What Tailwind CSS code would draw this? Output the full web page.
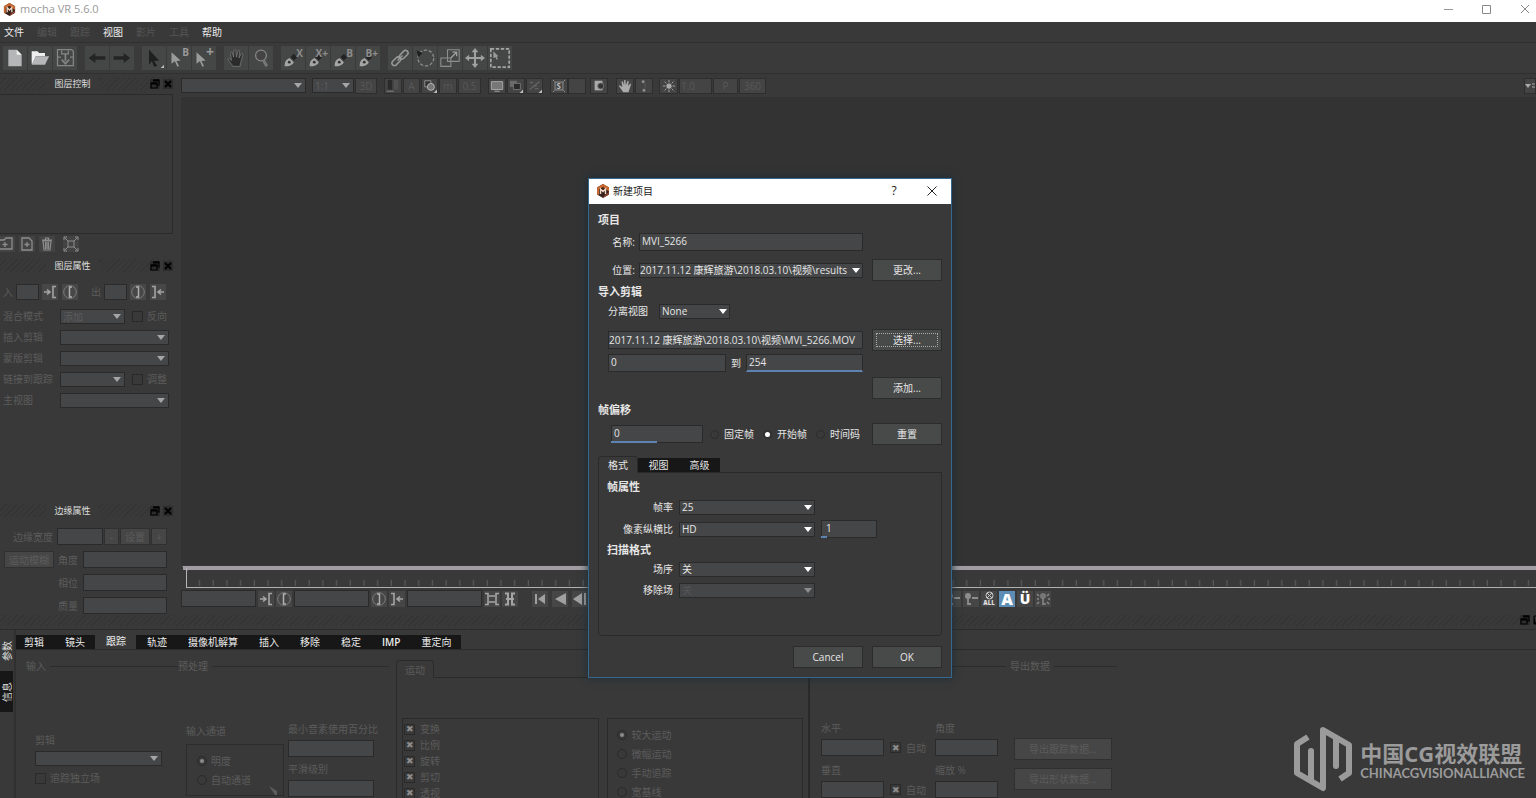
<!DOCTYPE html>
<html lang="zh-CN">
  <head>
    <meta charset="UTF-8" />
    <meta name="viewport" content="width=device-width, initial-scale=1.0" />
    <title>mocha VR 5.6.0</title>
    <script src="https://cdn.jsdelivr.net/npm/@tailwindcss/browser@4"></script>
  </head>
  <body class="relative flex h-screen flex-col overflow-hidden bg-[#393939] font-['Open_Sans','Noto_Sans_CJK_SC',sans-serif] text-[10px] leading-4 text-[#5c5c5c] [&_label]:whitespace-nowrap [&_select]:block [&_select]:h-[15px] [&_select]:w-full [&_select]:appearance-none [&_select]:border [&_select]:border-[#2a2a2a] [&_select]:bg-[#454648] [&_select]:pl-[2px] [&_select]:leading-3 [&_select]:opacity-100 [&_input[type=text]]:min-w-0 [&_input[type=text]]:border [&_input[type=text]]:border-[#2a2a2a] [&_input[type=text]]:bg-[#454648]">

    <!-- icons -->
    <svg class="hidden">
      <symbol id="logo" viewBox="0 0 14 14"><path d="M7 0l6 3.500v7L7 14l-6-3.500v-7z" fill="#3a221c"/><path d="M7 0l6 3.500v4L7 3 3 5v6L1 10.500v-7z" fill="#c8672f"/><path d="M7 14l6-3.500V8l-4 3z" fill="#8d4630"/><path d="M4.500 10V5L7 7.500 9.500 5v5" fill="none" stroke="#f0d8c8" stroke-width="1.400"/></symbol>
      <symbol id="arrow" viewBox="0 0 8 5"><path d="M0 0h8L4 5z" fill="currentColor"/></symbol>
      <symbol id="float" viewBox="0 0 10 10"><path d="M0 0h10v10H0z" fill="#2c2c2c"/><path d="M3 1h6v5H7M1 4h6v5H1z" fill="none" stroke="currentColor" stroke-width="1.200"/><path d="M3 1.500h6M1 4.500h6" stroke="currentColor" stroke-width="2"/></symbol>
      <symbol id="close" viewBox="0 0 10 10"><path d="M0 0h10v10H0z" fill="#2c2c2c"/><path d="M2 2l6 6M8 2L2 8" stroke="currentColor" stroke-width="2" fill="none"/></symbol>
      <symbol id="new" viewBox="0 0 24 24"><path d="M4 2h10l6 6v14H4z" fill="#b4b6b8"/><path d="M14 2v6h6z" fill="#eee"/></symbol>
      <symbol id="open" viewBox="0 0 24 24"><path d="M2 4h7l2 2h7v4H7L3 19H2z" fill="#eee"/><path d="M7 10h16l-5 10H2z" fill="#b4b6b8"/></symbol>
      <symbol id="save" viewBox="0 0 24 24"><path d="M3 2h17l2 2v17H3zM8 3v4h8V3M3 11h4M18 11h4" fill="none" stroke="#858585" stroke-width="1.500"/><path d="M12.500 7v9M8 14l4.500 5 4.500-5" fill="none" stroke="#858585" stroke-width="2"/></symbol>
      <symbol id="undo" viewBox="0 0 24 24"><path d="M2 12l8-6v4h12v4H10v4z" fill="#242424"/></symbol>
      <symbol id="redo" viewBox="0 0 24 24"><path d="M22 12l-8-6v4H2v4h12v4z" fill="#242424"/></symbol>
      <symbol id="cursor" viewBox="0 0 24 24"><path d="M6 2l12 13-6 .5 4 6-4 1-2.500-7L6 20z" fill="#1f1f1f"/><path d="M24 20v4h-4z" fill="#bbb"/></symbol>
      <symbol id="cursorsm" viewBox="0 0 24 24"><path d="M3 5l11 10-5 .5 3 6-2 1-3-6.500L3 19z" fill="#9a9a9a"/></symbol>
      <symbol id="hand" viewBox="0 0 24 24"><path d="M8 22c-1-3-4-5-6-9 1.500-1 3 0 4.500 2L5.500 6c.5-1.500 2-1.500 2.300 0L9 11l.5-8c.5-1.500 2-1.500 2.300 0l.7 8 2-7.500c.6-1.500 2-1 2 .5L15.500 12l3-5c1-1 2.200-.2 1.800 1L18 16c-.5 2-1 4-1 6z" fill="#2b2b2b" stroke="#7c7c7c" stroke-width=".9"/></symbol>
      <symbol id="zoomer" viewBox="0 0 24 24"><circle cx="12" cy="9" r="6.500" fill="#444" stroke="#858585" stroke-width="1.500"/><path d="M15 15l4 7" stroke="#777" stroke-width="3.500"/></symbol>
      <symbol id="pen" viewBox="0 0 24 24"><path d="M2 22c0-5 1-8 6-10l5 5c-2 4-6 5-11 5z" fill="#a5a5a5"/><path d="M9 11l4-4 4 4-4 4z" fill="#232323"/><circle cx="7.500" cy="17" r="1.700" fill="#333"/></symbol>
      <symbol id="link" viewBox="0 0 24 24"><g fill="none" stroke="#9a9a9a" stroke-width="1.800"><rect x="1.500" y="13" width="12" height="6" rx="3" transform="rotate(-45 7.500 16)"/><rect x="10.500" y="5" width="12" height="6" rx="3" transform="rotate(-45 16.500 8)"/><path d="M9 15l6-6"/></g></symbol>
      <symbol id="rotate" viewBox="0 0 24 24"><circle cx="13" cy="12" r="9.500" fill="none" stroke="#8d8d8d" stroke-width="1.500" stroke-dasharray="4 2"/><path d="M2 3l7 3-5 5z" fill="#1f1f1f"/></symbol>
      <symbol id="scale" viewBox="0 0 24 24"><path d="M9 2h14v14H9zM1 12h12v10H1z" fill="none" stroke="#8d8d8d" stroke-width="1.300"/><path d="M13 12l6-6M15 5h5v5" fill="none" stroke="#a0a0a0" stroke-width="1.500"/></symbol>
      <symbol id="move" viewBox="0 0 24 24"><path d="M12 3v18M3 12h18" stroke="#a0a0a0" stroke-width="2.500"/><path d="M12 0l4 5H8zM12 24l4-5H8zM0 12l5-4v8zM24 12l-5-4v8z" fill="#a0a0a0"/></symbol>
      <symbol id="marquee" viewBox="0 0 24 24"><rect x="1" y="1" width="22" height="22" fill="none" stroke="#a5a5a5" stroke-width="2" stroke-dasharray="4 2"/><path d="M4 4l6 6-2 .5 1.500 3-1.500.5-1.500-3L4 12z" fill="#999"/></symbol>
      <symbol id="folder" viewBox="0 0 16 16"><path d="M0 4h5l2-2h6v11H0M6 6v5M3.500 8.500h5" fill="none" stroke="#8d8d8d" stroke-width="1.300"/></symbol>
      <symbol id="dup" viewBox="0 0 16 16"><path d="M3 2h7l3 3v9H3zM8 6v5M5.500 8.500h5" fill="none" stroke="#8d8d8d" stroke-width="1.300"/></symbol>
      <symbol id="trash" viewBox="0 0 16 16"><path d="M4 5h8l-1 9H5zM3 4h10M6.500 3.500V2h3v1.500M6.500 6v7M8 6v7M9.500 6v7" fill="none" stroke="#8d8d8d" stroke-width="1.200"/></symbol>
      <symbol id="fit" viewBox="0 0 16 16"><path d="M5 5h6v6H5zM5 5L2 2M11 5l3-3M5 11l-3 3M11 11l3 3M1 4V1h3M12 1h3v3M1 12v3h3M12 15h3v-3" fill="none" stroke="#8d8d8d"/></symbol>
      <symbol id="in" viewBox="0 0 16 16"><path d="M2 8h5M5 5.500L8 8l-3 2.500M14 2.500h-3v11h3" fill="none" stroke="#a5a5a5" stroke-width="1.600"/></symbol>
      <symbol id="out" viewBox="0 0 16 16"><path d="M14 8H9M11 5.500L8 8l3 2.500M2 2.500h3v11H2" fill="none" stroke="#a5a5a5" stroke-width="1.600"/></symbol>
      <symbol id="setin" viewBox="0 0 16 16"><circle cx="8" cy="8" r="6.300" fill="none" stroke="#7d7d7d"/><path d="M10 3H7.500v10H10" fill="none" stroke="#b0b0b0" stroke-width="1.500"/></symbol>
      <symbol id="setout" viewBox="0 0 16 16"><circle cx="8" cy="8" r="6.300" fill="none" stroke="#7d7d7d"/><path d="M6 3h2.500v10H6" fill="none" stroke="#b0b0b0" stroke-width="1.500"/></symbol>
      <symbol id="range" viewBox="0 0 16 16"><path d="M1 2.500h3v11H1M15 2.500h-3v11h3M5 5h6M5 11h6" fill="none" stroke="#a5a5a5" stroke-width="1.600"/></symbol>
      <symbol id="range2" viewBox="0 0 16 16"><path d="M3 2.500h3v11H3M13 2.500h-3v11h3M4 8h8" fill="none" stroke="#a5a5a5" stroke-width="2"/></symbol>
      <symbol id="first" viewBox="0 0 16 16"><path d="M3 3h2v10H3zM13 3v10L6 8z" fill="#a0a0a0"/></symbol>
      <symbol id="rev" viewBox="0 0 16 16"><path d="M14 2v12L3 8z" fill="#a0a0a0"/></symbol>
      <symbol id="step" viewBox="0 0 16 16"><path d="M10 2v12L1 8zM12 2h2v12h-2z" fill="#a0a0a0"/></symbol>
      <symbol id="key" viewBox="0 0 16 16"><circle cx="5" cy="5" r="3" fill="#8d8d8d"/><path d="M5 7v7M5 13h3M9 7h6" stroke="#8d8d8d" stroke-width="1.800"/></symbol>
      <symbol id="monitor" viewBox="0 0 16 16"><path d="M1.500 3h13v9h-13z" fill="#777" stroke="#b0b0b0"/><path d="M5 14h6" stroke="#b0b0b0"/></symbol>
      <symbol id="layers" viewBox="0 0 16 16"><path d="M1 2h8v7H1z" fill="#6a6a6a"/><path d="M5 5h8v7H5z" fill="#2a2a2a" stroke="#777"/><path d="M16 12v4h-4z" fill="#bbb"/></symbol>
      <symbol id="mesh" viewBox="0 0 16 16"><path d="M2 12L13 3M2 4l4 0M8 11h4M7 8h3" stroke="#626262" stroke-width="1.500"/><path d="M16 12v4h-4z" fill="#bbb"/></symbol>
      <symbol id="half" viewBox="0 0 16 16"><path d="M3 2h9v11H3z" fill="#aaa"/><circle cx="10" cy="8" r="3.500" fill="#333" stroke="#777"/></symbol>
      <symbol id="palm" viewBox="0 0 16 16"><path d="M6 15L1 8l1-1 3 2-1-6 1.500-.5L7 7l0-6h1.500L9 7l2-5 1.300.5L11.500 8 14 5l1 1-2 6-1 3z" fill="#aaa"/></symbol>
      <symbol id="nodes" viewBox="0 0 16 16"><path d="M7 3L10 8 8 13" stroke="#5a5a5a" fill="none"/><circle cx="7" cy="3" r="1.700" fill="#8d8d8d"/><circle cx="8" cy="13" r="1.700" fill="#8d8d8d"/></symbol>
      <symbol id="sun" viewBox="0 0 16 16"><circle cx="8" cy="8" r="3" fill="#aaa"/><path d="M8 1v3M8 12v3M1 8h3M12 8h3M3 3l2 2M11 11l2 2M13 3l-2 2M5 11l-2 2" stroke="#aaa"/></symbol>
      <symbol id="shapes" viewBox="0 0 16 16"><path d="M2 2h7v7H2z" fill="#333" stroke="#999"/><circle cx="9" cy="9" r="4" fill="#777" stroke="#bbb"/><path d="M16 12v4h-4z" fill="#bbb"/></symbol>
    </svg>

    <!-- title bar -->
    <header class="flex h-[22px] shrink-0 items-center bg-white pb-1 text-[#999]">
      <svg class="ml-[3px] size-[13px]"><use href="#logo" /></svg>
      <h1 class="ml-1 text-[11px]">mocha VR 5.6.0</h1>
      <div class="ml-auto flex gap-[28px] pr-[6px]">
        <button aria-label="最小化"><svg class="size-[10px]" viewBox="0 0 10 10"><path d="M0 5.500h9" stroke="#999" /></svg></button>
        <button aria-label="最大化"><svg class="size-[10px]" viewBox="0 0 10 10"><path d="M.5 1.500h8v8h-8z" fill="none" stroke="#888" /></svg></button>
        <button aria-label="关闭"><svg class="size-[10px]" viewBox="0 0 10 10"><path d="M1 1l8 8M9 1L1 9" stroke="#888" /></svg></button>
      </div>
    </header>

    <nav class="flex h-[21px] shrink-0 items-center gap-[13px] border-b border-[#303030] pl-1 text-[#555]">
      <a href="#" class="text-[#ececec]">文件</a>
      <a href="#">编辑</a>
      <a href="#">跟踪</a>
      <a href="#" class="text-[#ececec]">视图</a>
      <a href="#">影片</a>
      <a href="#">工具</a>
      <a href="#" class="text-[#ececec]">帮助</a>
    </nav>

    <!-- main toolbar -->
    <div class="flex h-[31px] shrink-0 items-center gap-2 border-b border-[#303030] bg-[#3a3a3a] pl-[3px] [&_button]:relative [&_button]:size-6 [&_button]:bg-[#454646] [&_svg]:size-5 [&_svg]:m-[2px] [&>div]:flex [&>div]:gap-px">
      <div>
        <button aria-label="新建"><svg><use href="#new" /></svg></button>
        <button aria-label="打开"><svg><use href="#open" /></svg></button>
        <button aria-label="保存"><svg><use href="#save" /></svg></button>
      </div>
      <div>
        <button aria-label="撤销"><svg><use href="#undo" /></svg></button>
        <button aria-label="重做"><svg><use href="#redo" /></svg></button>
      </div>
      <div>
        <button aria-label="选择"><svg><use href="#cursor" /></svg></button>
        <button aria-label="选择 B"><svg><use href="#cursorsm" /></svg><b class="absolute right-[2px] top-0 leading-3 text-[#9a9a9a]">B</b></button>
        <button aria-label="添加点"><svg><use href="#cursorsm" /></svg><b class="absolute right-[2px] top-0 text-sm leading-3 text-[#9a9a9a]">+</b></button>
      </div>
      <div>
        <button aria-label="平移"><svg><use href="#hand" /></svg></button>
        <button aria-label="缩放"><svg><use href="#zoomer" /></svg></button>
      </div>
      <div class="[&_b]:absolute [&_b]:right-[2px] [&_b]:top-px [&_b]:leading-3 [&_b]:text-[#8d8d8d]">
        <button aria-label="X 样条"><svg><use href="#pen" /></svg><b>X</b></button>
        <button aria-label="添加 X 样条"><svg><use href="#pen" /></svg><b>X+</b></button>
        <button aria-label="贝塞尔"><svg><use href="#pen" /></svg><b>B</b></button>
        <button aria-label="添加贝塞尔"><svg><use href="#pen" /></svg><b>B+</b></button>
      </div>
      <div>
        <button aria-label="链接"><svg><use href="#link" /></svg></button>
        <button aria-label="旋转"><svg><use href="#rotate" /></svg></button>
        <button aria-label="缩放图层"><svg><use href="#scale" /></svg></button>
        <button aria-label="移动"><svg><use href="#move" /></svg></button>
        <button aria-label="框选"><svg><use href="#marquee" /></svg></button>
      </div>
    </div>

    <main class="flex min-h-0 flex-1">
      <!-- left docks -->
      <aside class="flex w-[181px] shrink-0 flex-col pr-[6px]">
        <section>
          <div class="relative mt-[3px] flex h-[13px] items-center justify-center bg-[repeating-linear-gradient(135deg,#343434_0_1px,transparent_1px_4px)] pr-[30px]">
            <h2 class="bg-[#393939] px-2 text-[9px] text-[#ddd]">图层控制</h2>
            <div class="absolute right-[2px] flex gap-[3px] bg-[#393939] text-black"><svg class="size-[10px]"><use href="#float" /></svg><svg class="size-[10px]"><use href="#close" /></svg></div>
          </div>
          <div class="mr-[2px] mt-1 h-[140px] border border-l-0 border-[#2a2a2a]"></div>
          <div class="mt-[2px] flex gap-1 [&_button]:bg-[#434343] [&_svg]:size-4">
            <button aria-label="新建组" class="-ml-px"><svg><use href="#folder" /></svg></button>
            <button aria-label="复制"><svg><use href="#dup" /></svg></button>
            <button aria-label="删除"><svg><use href="#trash" /></svg></button>
            <button aria-label="适合" class="ml-1"><svg><use href="#fit" /></svg></button>
          </div>
        </section>

        <section>
          <div class="relative mt-[7px] flex h-[13px] items-center justify-center bg-[repeating-linear-gradient(135deg,#343434_0_1px,transparent_1px_4px)] pr-[30px]">
            <h2 class="bg-[#393939] px-2 text-[9px] text-[#ddd]">图层属性</h2>
            <div class="absolute right-[2px] flex gap-[3px] bg-[#393939] text-black"><svg class="size-[10px]"><use href="#float" /></svg><svg class="size-[10px]"><use href="#close" /></svg></div>
          </div>
          <div class="mt-3 flex items-center gap-[3px] pl-[3px] [&_button]:bg-[#474747] [&_svg]:size-4 [&_input]:h-4 [&_input]:w-[23px]">
            <label for="in">入</label><input type="text" id="in" disabled />
            <button aria-label="入点"><svg><use href="#in" /></svg></button>
            <button aria-label="设置入点" class="ml-px"><svg><use href="#setin" /></svg></button>
            <label for="out" class="ml-[10px]">出</label><input type="text" id="out" disabled />
            <button aria-label="设置出点"><svg><use href="#setout" /></svg></button>
            <button aria-label="出点" class="ml-px"><svg><use href="#out" /></svg></button>
          </div>
          <div class="mt-[9px] grid grid-cols-[57px_65px_1fr] gap-y-[6px] pl-[3px] pr-[6px] leading-[15px] [&_span>svg]:absolute [&_span>svg]:right-1 [&_span>svg]:top-[5px] [&_span>svg]:h-[5px] [&_span>svg]:w-2 [&_span>svg]:text-[#a5a5a5] [&_span]:relative [&_input]:mr-1 [&_input]:size-[11px] [&_input]:appearance-none [&_input]:border [&_input]:border-[#282828]">
            <label for="blend">混合模式</label>
            <span><select id="blend" disabled><option>添加</option></select><svg><use href="#arrow" /></svg></span>
            <label class="flex items-center pl-[7px]"><input type="checkbox" disabled />反向</label>
            <label for="insert">插入剪辑</label>
            <span class="col-span-2"><select id="insert" disabled></select><svg><use href="#arrow" /></svg></span>
            <label for="matte">蒙版剪辑</label>
            <span class="col-span-2"><select id="matte" disabled></select><svg><use href="#arrow" /></svg></span>
            <label for="linkto">链接到跟踪</label>
            <span><select id="linkto" disabled></select><svg><use href="#arrow" /></svg></span>
            <label class="flex items-center pl-[7px]"><input type="checkbox" disabled />调整</label>
            <label for="hero">主视图</label>
            <span class="col-span-2"><select id="hero" disabled></select><svg><use href="#arrow" /></svg></span>
          </div>
        </section>

        <section class="mt-auto pb-px">
          <div class="relative flex h-[13px] items-center justify-center bg-[repeating-linear-gradient(135deg,#343434_0_1px,transparent_1px_4px)] pr-[30px]">
            <h2 class="bg-[#393939] px-2 text-[9px] text-[#ddd]">边缘属性</h2>
            <div class="absolute right-[2px] flex gap-[3px] bg-[#393939] text-black"><svg class="size-[10px]"><use href="#float" /></svg><svg class="size-[10px]"><use href="#close" /></svg></div>
          </div>
          <div class="mt-[11px] flex flex-col gap-[6px] pl-1 pr-2 [&_button]:h-[17px] [&_button]:border [&_button]:border-[#303030] [&_button]:bg-[#464646] [&_button]:leading-3 [&_input]:h-[17px] [&>div]:flex [&>div]:items-center [&>div]:justify-end">
            <div>
              <label for="ew" class="mr-1">边缘宽度</label><input type="text" id="ew" class="w-[46px]" disabled />
              <button class="ml-px w-[15px]" disabled>-</button><button class="ml-px w-[30px]" disabled>设置</button><button class="ml-px w-[16px]" disabled>+</button>
            </div>
            <div><button class="mr-auto w-[50px]" disabled>运动模糊</button><label for="angle" class="mr-[5px]">角度</label><input type="text" id="angle" class="w-[84px]" disabled /></div>
            <div><label for="phase" class="mr-[5px]">相位</label><input type="text" id="phase" class="w-[84px]" disabled /></div>
            <div><label for="quality" class="mr-[5px]">质量</label><input type="text" id="quality" class="w-[84px]" disabled /></div>
          </div>
        </section>
      </aside>

      <!-- viewer -->
      <div class="flex min-w-0 flex-1 flex-col">
        <div class="flex h-[23px] shrink-0 items-center overflow-hidden [&_button]:h-4 [&_button]:border [&_button]:border-[#2e2e2e] [&_button]:bg-[#444] [&_button]:leading-3 [&_button]:text-[#585858] [&_button_svg]:mx-auto [&_button_svg]:size-[14px] [&_span]:relative [&_span>svg]:absolute [&_span>svg]:right-1 [&_span>svg]:top-[5px] [&_span>svg]:h-[5px] [&_span>svg]:w-2 [&_span>svg]:text-[#a5a5a5]">
          <span class="w-[125px]"><select aria-label="剪辑" disabled></select><svg><use href="#arrow" /></svg></span>
          <span class="ml-[6px] w-[42px]"><select aria-label="比例" disabled><option>1:1</option></select><svg><use href="#arrow" /></svg></span>
          <button class="ml-px w-[22px]" disabled>3D</button>
          <button aria-label="颜色" class="ml-[7px] w-[18px]"><svg viewBox="0 0 16 16"><path d="M2 1h5v11H2z" fill="#2a2a2a" /><path d="M9 1h5v11H9z" fill="#505050" /><path d="M1 14h8" stroke="#888" /></svg></button>
          <button class="ml-px w-[17px]" disabled>A</button>
          <button aria-label="遮罩" class="ml-px w-[17px]"><svg><use href="#shapes" /></svg></button>
          <button class="ml-px w-[18px]" disabled>m</button>
          <button class="ml-px w-[23px]" disabled>0.5</button>
          <button aria-label="显示" class="ml-[7px] w-[18px]"><svg><use href="#monitor" /></svg></button>
          <button aria-label="图层" class="ml-px w-[18px]"><svg><use href="#layers" /></svg></button>
          <button aria-label="网格" class="ml-px w-[17px]"><svg><use href="#mesh" /></svg></button>
          <button aria-label="稳定" class="ml-[7px] w-[18px]"><svg viewBox="0 0 16 16"><path d="M3.500 3.500h9v9h-9zM1 1l2 2M15 1l-2 2M1 15l2-2M15 15l-2-2" fill="none" stroke="#999" /><text x="5" y="11" font-size="9" font-weight="700" fill="#bbb">S</text></svg></button>
          <button class="w-[18px]" aria-label="空"></button>
          <button aria-label="对比" class="ml-1 w-[18px]"><svg><use href="#half" /></svg></button>
          <button aria-label="抓手" class="ml-2 w-[18px]"><svg><use href="#palm" /></svg></button>
          <button aria-label="节点" class="ml-px w-[18px]"><svg><use href="#nodes" /></svg></button>
          <button aria-label="亮度" class="ml-[6px] w-[19px]"><svg><use href="#sun" /></svg></button>
          <button class="ml-px w-[33px] pl-px text-left" disabled>1.0</button>
          <button class="ml-px w-[25px]" disabled>P</button>
          <button class="ml-px w-[27px]" disabled>360</button>
          <button aria-label="菜单" class="ml-auto w-[12px]"><svg class="!size-[10px]" viewBox="0 0 10 10"><path d="M0 3h6L3 7z" fill="#aaa" /><path d="M7 3h3M7 6h3" stroke="#aaa" /></svg></button>
        </div>
        <div class="flex-1 bg-[#333]"></div>
        <svg class="h-[25px] w-full shrink-0 bg-[#393939]">
          <defs><pattern id="ticks" width="13.700" height="25" patternUnits="userSpaceOnUse" x="5.500"><path d="M13 15v6" stroke="#606060" /></pattern></defs>
          <rect x="6" y="0" width="100%" height="25" fill="url(#ticks)" />
          <rect x="2" y="1" width="100%" height="4" fill="#a09ca2" />
          <path d="M1 1h9l-4 5z" fill="#a09ca2" />
          <path d="M5.500 3v20" stroke="#b5b5b5" />
          <rect x="5" y="22" width="100%" height="1" fill="#b0b0b0" />
        </svg>
        <div class="mb-[8px] flex h-[17px] shrink-0 items-center gap-[2px] [&_button]:h-4 [&_button]:w-4 [&_button]:bg-[#464646] [&_input]:h-[17px] [&_input]:w-[75px] [&_svg]:size-4">
          <input type="text" aria-label="入点帧" disabled />
          <button aria-label="入点"><svg><use href="#in" /></svg></button>
          <button aria-label="设置入点"><svg><use href="#setin" /></svg></button>
          <input type="text" aria-label="当前帧" disabled />
          <button aria-label="设置出点"><svg><use href="#setout" /></svg></button>
          <button aria-label="出点"><svg><use href="#out" /></svg></button>
          <input type="text" aria-label="出点帧" disabled />
          <button aria-label="缩放范围"><svg><use href="#range" /></svg></button>
          <button aria-label="完整范围"><svg><use href="#range2" /></svg></button>
          <button aria-label="第一帧" class="ml-3"><svg><use href="#first" /></svg></button>
          <button aria-label="倒放" class="ml-[2px]"><svg><use href="#rev" /></svg></button>
          <button aria-label="上一帧" class="ml-[2px]"><svg><use href="#step" /></svg></button>
          <button aria-label="添加关键帧" class="ml-[355px]"><svg><use href="#key" /></svg></button>
          <button aria-label="删除关键帧"><svg><use href="#key" /></svg></button>
          <button aria-label="全部关键帧" class="flex flex-col items-center text-[6px] font-black leading-[6px] text-[#e0e0e0]"><svg class="!size-[9px]" viewBox="0 0 9 9"><path d="M2 2l5 5M7 2L2 7" stroke="#ccc" /><circle cx="4.500" cy="4.500" r="3.500" fill="none" stroke="#ccc" /></svg>ALL</button>
          <button class="!bg-[#5d8cb5] text-base font-extrabold leading-4 text-white">A</button>
          <button class="text-sm font-extrabold leading-4 text-white">Ü</button>
          <button aria-label="关键帧选项"><svg viewBox="0 0 16 16"><circle cx="8" cy="5" r="3" fill="#777" /><path d="M8 7v7M8 13h3M2 3l2 2M2 13l2-2M14 3l-2 2M14 13l-2-2M2 8h2M13 8h2" stroke="#888" stroke-width="1.500" /></svg></button>
        </div>
      </div>
    </main>

    <!-- parameters dock -->
    <section class="flex h-[183px] shrink-0 flex-col overflow-hidden">
      <div class="flex h-[15px] shrink-0 justify-end border-b border-[#2c2c2c] pb-[4px]">
        <div class="h-[11px] flex-1 bg-[repeating-linear-gradient(135deg,#343434_0_1px,transparent_1px_4px)]"></div>
        <div class="flex gap-[3px] text-black"><svg class="size-[10px]"><use href="#float" /></svg><svg class="h-[10px] w-[3px]" viewBox="0 0 3 10"><path d="M1 1h2M1 1v8h2" stroke="currentColor" /></svg></div>
      </div>
      <div class="flex min-h-0 flex-1">
        <div class="w-[13px] shrink-0 text-[#ddd] [&_button]:flex [&_button]:h-[41px] [&_button]:w-[13px] [&_button]:items-center [&_button]:justify-center [&_span]:-rotate-90 [&_span]:whitespace-nowrap">
          <button><span>参数</span></button>
          <button class="bg-[#171717]"><span>信息</span></button>
        </div>
        <div class="ml-px flex min-w-0 flex-1 flex-col border-l-2 border-[#303030]">
          <div class="flex h-[20px] shrink-0 items-end border-b border-[#2a2a2a] text-[#ececec] [&_button]:h-[14px] [&_button]:bg-[#171717] [&_button]:pl-[11px] [&_button]:pr-[10px] [&_button]:leading-[14px]">
            <button class="!pl-2">剪辑</button><button>镜头</button><button class="!h-[17px] !bg-[#393939]">跟踪</button><button>轨迹</button><button>摄像机解算</button><button>插入</button><button>移除</button><button>稳定</button><button class="font-semibold">IMP</button><button>重定向</button>
          </div>
          <div class="flex min-h-0 flex-1 overflow-hidden [&_input[type=checkbox]]:flex [&_input[type=checkbox]]:size-[11px] [&_input[type=checkbox]]:shrink-0 [&_input[type=checkbox]]:appearance-none [&_input[type=checkbox]]:items-center [&_input[type=checkbox]]:justify-center [&_input[type=checkbox]]:border [&_input[type=checkbox]]:border-[#2a2a2a] [&_input[type=checkbox]]:text-[9px] [&_input[type=checkbox]]:text-[#8d8d8d] [&_input[type=checkbox]]:checked:before:content-['✖'] [&_input[type=radio]]:flex [&_input[type=radio]]:size-[10px] [&_input[type=radio]]:appearance-none [&_input[type=radio]]:items-center [&_input[type=radio]]:justify-center [&_input[type=radio]]:rounded-full [&_input[type=radio]]:border [&_input[type=radio]]:border-[#2a2a2a] [&_input[type=radio]]:checked:before:size-1 [&_input[type=radio]]:checked:before:rounded-full [&_input[type=radio]]:checked:before:bg-[#8d8d8d] [&_input[type=radio]]:checked:before:content-['']">
            <fieldset class="w-[162px] shrink-0 pl-[10px] pt-2">
              <div class="flex items-center gap-1 after:h-px after:flex-1 after:bg-[#2c2c2c]">输入</div>
              <div class="pl-[9px] pr-2 pt-[58px]">
                <label for="clip" class="block">剪辑</label>
                <span class="relative mt-[3px] block w-[127px]"><select id="clip" disabled></select><svg class="absolute right-1 top-[5px] h-[5px] w-2 text-[#a5a5a5]"><use href="#arrow" /></svg></span>
                <label class="mt-1 flex items-center gap-1"><input type="checkbox" disabled />追踪独立场</label>
              </div>
            </fieldset>
            <fieldset class="w-[211px] shrink-0 pt-2">
              <div class="flex items-center gap-1 after:h-px after:flex-1 after:bg-[#2c2c2c]">预处理</div>
              <div class="flex gap-1 pl-2 pt-[47px]">
                <div class="w-[98px] pt-[2px]">
                  <p>输入通道</p>
                  <div class="relative mt-[5px] h-[52px] border border-[#2c2c2c] pl-[10px] pt-2 [&_label]:mb-[3px] [&_label]:flex [&_label]:items-center [&_label]:gap-1">
                    <label><input type="radio" name="channel" checked disabled />明度</label>
                    <label><input type="radio" name="channel" disabled />自动通道</label>
                    <svg class="absolute bottom-0 right-[5px] size-[9px]" viewBox="0 0 9 9"><path d="M0 0l8 5v4H6z" fill="#5c5c5c" /></svg>
                  </div>
                </div>
                <div class="[&_input]:block [&_input]:h-[17px] [&_input]:w-[86px]">
                  <label for="minpx" class="mb-[3px] block">最小音素使用百分比</label>
                  <input type="text" id="minpx" disabled />
                  <label for="smooth" class="mb-[3px] mt-1 block">平滑级别</label>
                  <input type="text" id="smooth" disabled />
                </div>
              </div>
            </fieldset>
            <div class="ml-[7px] flex w-[414px] shrink-0 flex-col pt-[10px]">
              <div class="flex h-[18px] shrink-0">
                <button class="w-[38px] rounded-t-sm border border-b-0 border-[#2a2a2a]" disabled>运动</button>
                <div class="flex-1 border-b border-[#2a2a2a]"></div>
              </div>
              <div class="grid flex-1 grid-cols-2 gap-2 border-l border-r-2 border-[#2a2a2a] px-[5px] pt-[40px] [&_label]:flex [&_label]:items-center [&_label]:gap-[5px]">
                <div class="h-[100px] border border-[#2a2a2a] px-[1px] pt-[2px]">
                  <label><input type="checkbox" checked disabled />变换</label>
                  <label><input type="checkbox" checked disabled />比例</label>
                  <label><input type="checkbox" checked disabled />旋转</label>
                  <label><input type="checkbox" checked disabled />剪切</label>
                  <label><input type="checkbox" checked disabled />透视</label>
                </div>
                <div class="flex h-[100px] flex-col gap-[3px] border border-[#2a2a2a] px-[9px] pt-2">
                  <label><input type="radio" name="motion" checked disabled />较大运动</label>
                  <label><input type="radio" name="motion" disabled />微幅运动</label>
                  <label><input type="radio" name="motion" disabled />手动追踪</label>
                  <label><input type="radio" name="motion" disabled />宽基线</label>
                </div>
              </div>
            </div>
            <fieldset class="w-[307px] shrink-0 pt-2">
              <div class="flex items-center gap-1 before:h-px before:w-[196px] before:bg-[#2c2c2c] after:h-px after:flex-1 after:bg-[#2c2c2c]">导出数据</div>
              <div class="flex pl-[11px] pt-[46px] [&_input[type=text]]:h-[17px] [&_input[type=text]]:w-[63px]">
                <div class="w-[114px]">
                  <label for="horz" class="mb-[3px] block">水平</label>
                  <div class="flex items-center"><input type="text" id="horz" disabled /><label class="ml-[6px] flex items-center gap-[5px]"><input type="checkbox" checked disabled />自动</label></div>
                  <label for="vert" class="mb-[3px] mt-[6px] block">垂直</label>
                  <div class="flex items-center"><input type="text" id="vert" disabled /><label class="ml-[6px] flex items-center gap-[5px]"><input type="checkbox" checked disabled />自动</label></div>
                </div>
                <div class="w-[79px] [&_input]:block">
                  <label for="rot" class="mb-[3px] block">角度</label>
                  <input type="text" id="rot" disabled />
                  <label for="zoom" class="mb-[3px] mt-[6px] block">缩放 %</label>
                  <input type="text" id="zoom" disabled />
                </div>
                <div class="flex flex-col gap-2 pt-[18px] [&_button]:h-[22px] [&_button]:w-[98px] [&_button]:border [&_button]:border-[#303030] [&_button]:bg-[#464646]">
                  <button disabled>导出跟踪数据...</button>
                  <button disabled>导出形状数据...</button>
                </div>
              </div>
            </fieldset>
          </div>
        </div>
      </div>
    </section>

    <!-- watermark -->
    <div class="pointer-events-none absolute bottom-[5px] right-[11px] flex items-center gap-2 text-[#9b9b9b]">
      <svg class="h-[68px] w-[58px]" viewBox="0 0 58 68" fill="none" stroke="#9b9b9b" stroke-width="6">
        <path d="M14 12L3 19v29L29 63V5L55 20v28L46 54" stroke-linejoin="round" />
        <path d="M17 26v29M42 13v28" stroke-linecap="round" />
      </svg>
      <div class="whitespace-nowrap">
        <p class="text-[22px] font-bold leading-7">中国CG视效联盟</p>
        <p class="font-['Lato'] text-[13px] font-bold leading-3">CHINACGVISIONALLIANCE</p>
      </div>
    </div>

    <!-- new project dialog -->
    <form class="absolute left-[588px] top-[178px] w-[364px] border border-[#34698f] bg-[#393939] text-[#e6e6e6] shadow-[0_0_8px_#1c2c38] [&_span]:relative [&_span>svg]:absolute [&_span>svg]:right-[3px] [&_span>svg]:top-[5px] [&_span>svg]:h-[5px] [&_span>svg]:w-2 [&_span>svg]:text-white [&_input[type=text]]:h-[18px] [&_input[type=text]]:px-[2px] [&_input[type=text]]:pb-[2px] [&_h3]:text-[11px] [&_h3]:font-bold [&_h3]:leading-4">
      <div class="flex h-[25px] items-center bg-white pb-px pl-[7px] text-[#222]">
        <svg class="size-[14px]"><use href="#logo" /></svg>
        <h2 class="ml-[3px]">新建项目</h2>
        <button type="button" class="ml-auto w-3 text-xs" aria-label="帮助">?</button>
        <button type="button" class="ml-[27px] mr-[14px]" aria-label="关闭"><svg class="size-[10px]" viewBox="0 0 10 10"><path d="M.5.5l9 9M9.500.5l-9 9" stroke="#222" /></svg></button>
      </div>
      <div class="px-[9px] pb-[9px] pt-2 [&_.btn]:h-[22px] [&_.btn]:w-[70px] [&_.btn]:border [&_.btn]:border-[#2c2c2c] [&_.btn]:bg-[#484949]">
        <h3>项目</h3>
        <div class="mt-[3px] flex h-[22px] items-center">
          <label for="name" class="w-[37px] text-right">名称:</label>
          <input type="text" id="name" class="ml-1 w-[224px]" value="MVI_5266" />
        </div>
        <div class="mt-[6px] flex h-[22px] items-center">
          <label for="location" class="w-[37px] text-right">位置:</label>
          <span class="ml-1 w-[224px]"><select id="location" class="!pl-0"><option>2017.11.12 康辉旅游\2018.03.10\视频\results</option></select><svg><use href="#arrow" /></svg></span>
          <button type="button" class="btn ml-auto">更改...</button>
        </div>
        <h3 class="mt-[3px]">导入剪辑</h3>
        <div class="mt-[3px] flex h-4 items-center pl-[10px]">
          <label for="split">分离视图</label>
          <span class="ml-[11px] w-[71px]"><select id="split"><option>None</option></select><svg><use href="#arrow" /></svg></span>
        </div>
        <div class="mt-[10px] flex h-[22px] items-center pl-[10px]">
          <input type="text" aria-label="剪辑文件" class="w-[255px] !px-0" value="2017.11.12 康辉旅游\2018.03.10\视频\MVI_5266.MOV" />
          <button type="button" class="btn ml-auto p-[3px]"><div class="border border-dotted border-[#aaa] leading-3">选择...</div></button>
        </div>
        <div class="mt-[3px] flex h-[18px] items-center pl-[10px]">
          <input type="text" id="start" aria-label="开始帧号" class="w-[118px]" value="0" />
          <label for="end" class="mx-[5px]">到</label>
          <input type="text" id="end" class="w-[117px] !border-b-2 !border-b-[#5f83b0]" value="254" />
        </div>
        <div class="mt-[5px] flex justify-end"><button type="button" class="btn">添加...</button></div>
        <h3 class="mt-[3px]">帧偏移</h3>
        <div class="mt-[5px] flex h-[22px] items-center pl-[13px] [&_input[type=radio]]:flex [&_input[type=radio]]:size-[9px] [&_input[type=radio]]:appearance-none [&_input[type=radio]]:items-center [&_input[type=radio]]:justify-center [&_input[type=radio]]:rounded-full [&_input[type=radio]]:border [&_input[type=radio]]:border-[#2c2c2c] [&_input[type=radio]]:checked:before:size-[5px] [&_input[type=radio]]:checked:before:rounded-full [&_input[type=radio]]:checked:before:bg-white [&_input[type=radio]]:checked:before:content-[''] [&_label]:flex [&_label]:items-center [&_label]:gap-[5px]">
          <div class="relative flex"><input type="text" aria-label="帧偏移" class="w-[92px]" value="0" /><i class="absolute bottom-0 left-0 h-[2px] w-[46px] bg-[#5f83b0]"></i></div>
          <label class="ml-[7px]"><input type="radio" name="offset" />固定帧</label>
          <label class="ml-[9px]"><input type="radio" name="offset" checked />开始帧</label>
          <label class="ml-[9px]"><input type="radio" name="offset" />时间码</label>
          <button type="button" class="btn ml-auto">重置</button>
        </div>
        <div class="mt-[11px] flex h-4 items-end [&_button]:w-[41px]">
          <button type="button" class="relative -mb-px h-[17px] rounded-t-sm border border-b-0 border-[#2a2a2a] bg-[#393939] !w-[40px]">格式</button>
          <button type="button" class="h-[14px] bg-[#171717] leading-[14px]">视图</button>
          <button type="button" class="h-[14px] bg-[#171717] leading-[14px]">高级</button>
        </div>
        <div class="h-[164px] rounded-b-sm border border-[#2a2a2a] pl-2 pt-[6px] [&_div>label]:w-[66px] [&_div>label]:text-right [&_span]:ml-[6px] [&_span]:w-[136px]">
          <h3>帧属性</h3>
          <div class="mt-[4px] flex h-4 items-center">
            <label for="fps">帧率</label>
            <span><select id="fps"><option>25</option></select><svg><use href="#arrow" /></svg></span>
          </div>
          <div class="mt-[5px] flex h-[18px] items-center">
            <label for="par">像素纵横比</label>
            <span><select id="par"><option>HD</option></select><svg><use href="#arrow" /></svg></span>
            <div class="relative ml-[6px] flex"><input type="text" aria-label="比值" class="w-[56px] !pl-1" value="1" /><i class="absolute bottom-0 left-0 h-[2px] w-[6px] bg-[#5f83b0]"></i></div>
          </div>
          <h3 class="mt-[4px]">扫描格式</h3>
          <div class="mt-[3px] flex h-4 items-center">
            <label for="field">场序</label>
            <span><select id="field"><option>关</option></select><svg><use href="#arrow" /></svg></span>
          </div>
          <div class="mt-[5px] flex h-4 items-center">
            <label for="remove">移除场</label>
            <span class="[&>svg]:!text-[#8d8d8d]"><select id="remove" class="text-[#555]" disabled><option>关</option></select><svg><use href="#arrow" /></svg></span>
          </div>
        </div>
        <div class="mt-[10px] flex justify-end gap-[9px]">
          <button type="button" class="btn">Cancel</button>
          <button type="submit" class="btn">OK</button>
        </div>
      </div>
    </form>
  </body>
</html>
